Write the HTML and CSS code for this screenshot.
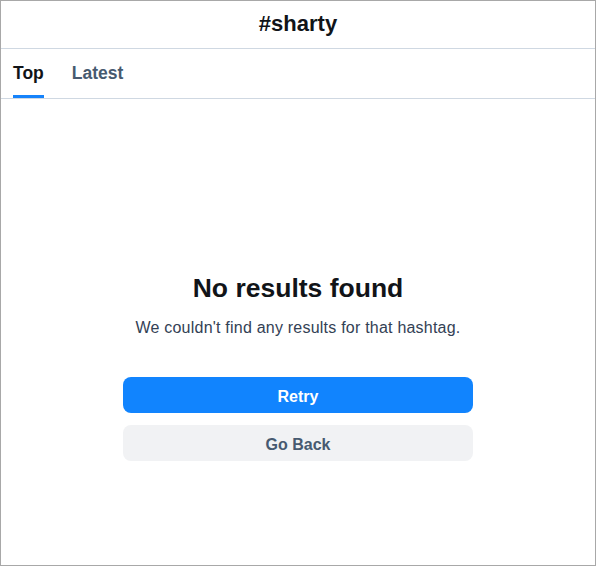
FILE: index.html
```html
<!DOCTYPE html>
<html>
<head>
  <title>#sharty</title>
  <link rel="stylesheet" href="styles.css">
</head>
<body>
  <div class="frame">
    <div class="header">
      <h1>#sharty</h1>
    </div>
    <div class="tabs">
      <div class="tab active">Top</div>
      <div class="tab">Latest</div>
    </div>
    <div class="empty">
      <h2>No results found</h2>
      <p>We couldn't find any results for that hashtag.</p>
      <div class="actions">
        <button class="btn primary">Retry</button>
        <button class="btn secondary">Go Back</button>
      </div>
    </div>
  </div>
</body>
</html>
```

FILE: styles.css
```css
html, body {
  margin: 0;
  padding: 0;
}
body {
  font-family: "Liberation Sans", Arial, sans-serif;
  background: #fff;
  color: #111418;
}
.frame {
  height: 566px;
  box-sizing: border-box;
  border: 1px solid #a8a8a8;
  display: flex;
  flex-direction: column;
}
.header {
  height: 47px;
  border-bottom: 1px solid #cfd8e2;
  display: flex;
  align-items: center;
  justify-content: center;
}
h1 {
  margin: 0;
  font-size: 22px;
  font-weight: bold;
  padding-bottom: 1px;
}
.tabs {
  height: 49px;
  border-bottom: 1px solid #cfd8e2;
  display: flex;
  gap: 28px;
  padding-left: 12px;
}
.tab {
  display: flex;
  align-items: center;
  font-size: 17.5px;
  font-weight: bold;
  color: #475a70;
  border-bottom: 3px solid transparent;
  padding-top: 3px;
}
.tab.active {
  color: #111418;
  border-bottom-color: #1683fb;
}
.empty {
  display: flex;
  flex-direction: column;
  align-items: center;
  padding-top: 173px;
}
h2 {
  margin: 0;
  font-size: 26.5px;
  line-height: 32px;
  font-weight: bold;
}
.empty p {
  margin: 12px 0 0;
  font-size: 16px;
  line-height: 24px;
  color: #334155;
  letter-spacing: 0.22px;
}
.actions {
  margin-top: 37px;
  width: 350px;
  display: flex;
  flex-direction: column;
  gap: 12px;
}
.btn {
  height: 36px;
  padding: 3px 0 0;
  border: none;
  border-radius: 8px;
  font-family: inherit;
  font-size: 16px;
  font-weight: bold;
  cursor: pointer;
}
.primary {
  background-color: #1184fe;
  color: #fff;
}
.secondary {
  background-color: #f1f2f4;
  color: #475a70;
}
```
